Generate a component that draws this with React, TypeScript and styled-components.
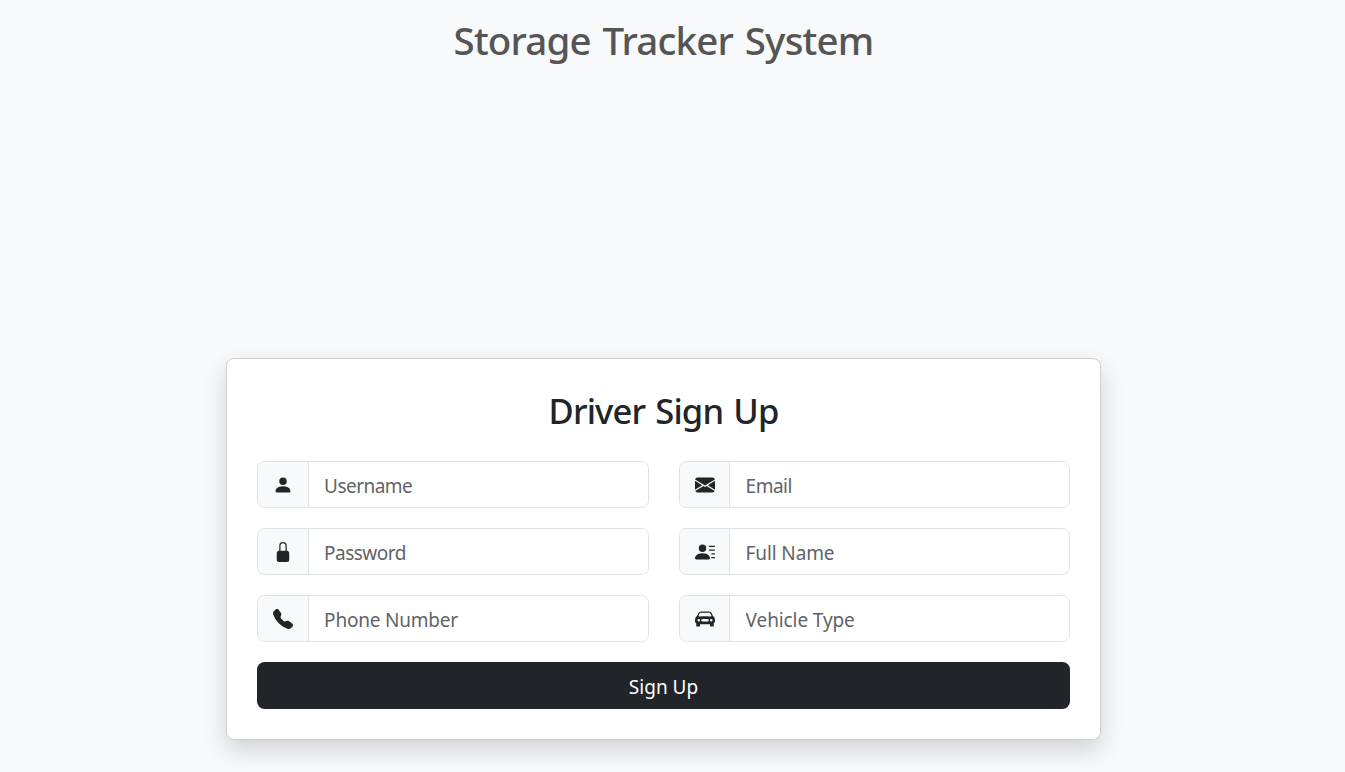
import React from "react";
import styled, { createGlobalStyle } from "styled-components";
import { BsPersonFill, BsEnvelopeFill, BsLockFill, BsPersonLinesFill, BsTelephoneFill, BsCarFrontFill } from "react-icons/bs";

const Global = createGlobalStyle`
  *{box-sizing:border-box}
  body{margin:0;background:#f8f9fb;color:#212529;font-family:"Noto Sans",sans-serif;}
`;
const Page = styled.div`width:1327px;height:772px;padding-top:16px;overflow:hidden;`;
const Title = styled.h1`margin:0;text-align:center;font:500 38.5px/48px "Noto Sans",sans-serif;letter-spacing:-0.8px;word-spacing:2.5px;color:#555;`;
const Card = styled.main`width:875px;height:382px;margin:294px auto 0;padding:28px 30px;background:#fff;border:1px solid #cfcfd0;border-radius:8px;box-shadow:0 10px 25px rgba(0,0,0,.16);`;
const Heading = styled.h2`margin:0 0 26px;font:500 34.5px/48px "Noto Sans",sans-serif;letter-spacing:-0.85px;word-spacing:2px;text-align:center;`;
const Fields = styled.form`display:grid;grid-template-columns:1fr 1fr;gap:20px 30px;`;
const Group = styled.label`display:flex;height:47px;border:1px solid #dee2e6;border-radius:7.5px;overflow:hidden;`;
const Icon = styled.span`width:50.6px;flex:none;display:grid;place-items:center;padding-left:1px;background:#f8f9fb;border-right:1px solid #dee2e6;`;
const Input = styled.input<{ $tracking: number }>`
  flex:1;min-width:0;border:0;outline:0;padding:2px 15.5px 0;font:400 19px "Noto Sans",sans-serif;
  letter-spacing:${(p) => p.$tracking}px;background:#fff;
  &::placeholder{color:#5f6367;opacity:1}
`;
const Button = styled.button`grid-column:1/-1;height:47px;border:0;padding:2px 0 0;border-radius:7.5px;background:#212529;color:#fff;font:400 19px "Noto Sans",sans-serif;`;

const fields = [
  { label: "Username", Glyph: BsPersonFill, tracking: -0.55 },
  { label: "Email", Glyph: BsEnvelopeFill, tracking: -0.5 },
  { label: "Password", Glyph: BsLockFill, tracking: -0.52 },
  { label: "Full Name", Glyph: BsPersonLinesFill, tracking: -0.12 },
  { label: "Phone Number", Glyph: BsTelephoneFill, tracking: -0.2 },
  { label: "Vehicle Type", Glyph: BsCarFrontFill, tracking: -0.1 },
];

export default function App() {
  return (
    <Page>
      <Global />
      <Title>Storage Tracker System</Title>
      <Card>
        <Heading>Driver Sign Up</Heading>
        <Fields>
          {fields.map(({ label, Glyph, tracking }) => (
            <Group key={label}>
              <Icon><Glyph size={20} /></Icon>
              <Input placeholder={label} $tracking={tracking} />
            </Group>
          ))}
          <Button type="button">Sign Up</Button>
        </Fields>
      </Card>
    </Page>
  );
}
